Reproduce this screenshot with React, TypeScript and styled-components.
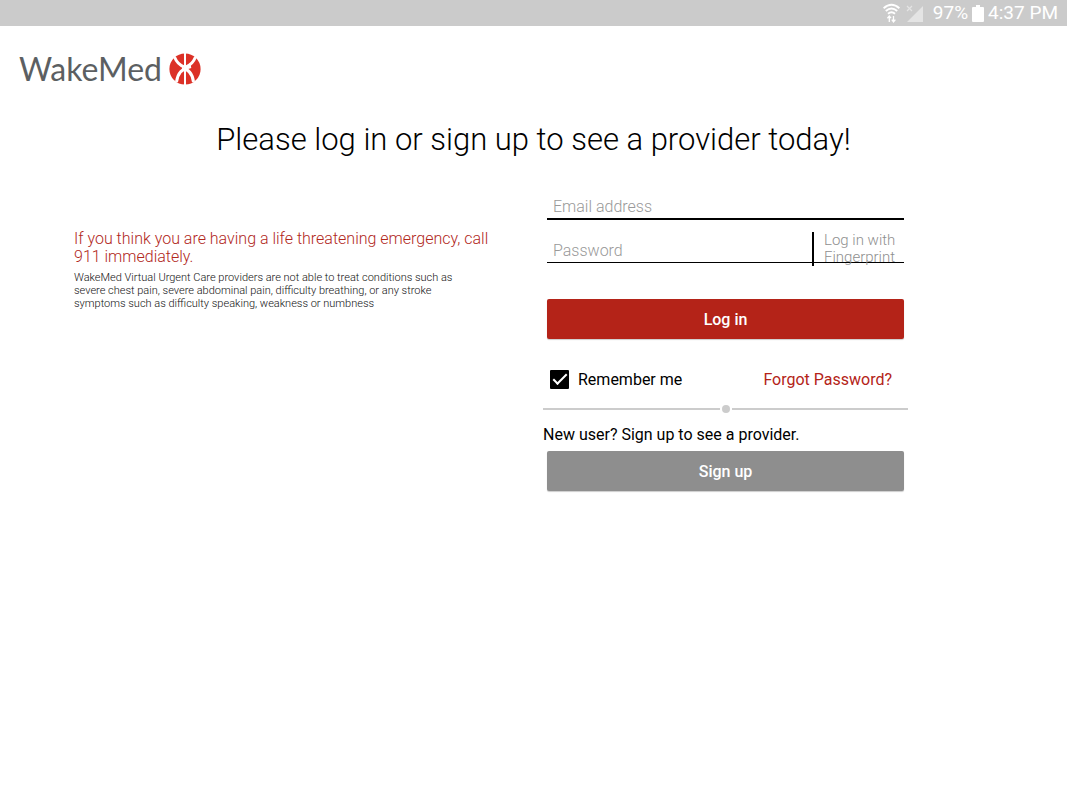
import React from "react";
import styled, { createGlobalStyle } from "styled-components";

const GlobalStyle = createGlobalStyle`
  *, *::before, *::after { box-sizing: border-box; }
  body {
    margin: 0;
    background: #fff;
    color: #000;
    font-family: Roboto, "Liberation Sans", sans-serif;
    font-size: 16px;
  }
  button, input { font: inherit; }
`;

const StatusBar = styled.div`
  display: flex;
  align-items: center;
  justify-content: flex-end;
  height: 26px;
  padding-right: 9px;
  background: #cbcbcb;
  color: #fff;
  font-size: 19px;
  line-height: 24px;
  white-space: nowrap;
`;

const StatusIcon = styled.svg<{ $gap: number }>`
  display: block;
  flex: none;
  margin-right: ${(p) => p.$gap}px;
`;

const StatusText = styled.span<{ $gap?: number }>`
  margin-right: ${(p) => p.$gap ?? 0}px;
`;

const Header = styled.header`
  display: flex;
  align-items: center;
  height: 60px;
  padding: 26px 19px 0;
`;

const Brand = styled.a`
  display: flex;
  align-items: center;
  gap: 7px;
  color: #5c5f62;
  text-decoration: none;
`;

const BrandName = styled.span`
  font-family: Lato, "Liberation Sans", sans-serif;
  font-size: 32px;
  font-weight: 400;
  line-height: 32px;
`;

const Title = styled.h1`
  margin: 34px 0 0;
  font-size: 31px;
  font-weight: 300;
  line-height: 40px;
  text-align: center;
`;

const Columns = styled.main`
  display: grid;
  grid-template-columns: 420fr 365fr;
  column-gap: 49px;
  align-items: start;
  padding: 33px 159px 40px 74px;
`;

const Notice = styled.section`
  padding-top: 37px;
`;

const Warning = styled.p`
  margin: 0;
  color: #b1271b;
  font-weight: 300;
  line-height: 18px;
`;

const Detail = styled.p`
  margin: 5px 0 0;
  padding-right: 20px;
  color: #111;
  font-size: 11px;
  font-weight: 300;
  line-height: 13px;
`;

const Form = styled.form`
  display: flex;
  flex-direction: column;
`;

const Field = styled.div<{ $line: number }>`
  display: flex;
  align-items: flex-end;
  height: ${(p) => (p.$line === 2 ? 27 : 43)}px;
  margin: 0 4px;
  border-bottom: ${(p) => p.$line}px solid #000;
`;

const Input = styled.input`
  flex: 1;
  min-width: 0;
  height: 24px;
  padding: 0 6px;
  border: 0;
  outline: 0;
  background: transparent;
  font-weight: 300;
  &::placeholder {
    color: #999;
    opacity: 1;
  }
`;

const FingerprintButton = styled.button`
  flex: none;
  width: 92px;
  height: 34px;
  margin-bottom: -4px;
  padding: 0 0 0 10px;
  border: 0;
  border-left: 2px solid #000;
  background: transparent;
  color: #8f8f8f;
  font-size: 15px;
  font-weight: 300;
  line-height: 17px;
  text-align: left;
`;

const Button = styled.button<{ $color: string }>`
  height: 40px;
  margin: 0 4px;
  border: 0;
  border-radius: 2px;
  background: ${(p) => p.$color};
  box-shadow: 0 1px 1px rgba(0, 0, 0, 0.2);
  color: #fff;
  font-weight: 500;
`;

const LoginButton = styled(Button)`
  margin-top: 36px;
`;

const Options = styled.div`
  display: flex;
  align-items: center;
  justify-content: space-between;
  height: 20px;
  margin-top: 30px;
  padding: 0 16px 0 7px;
`;

const Remember = styled.label`
  display: flex;
  align-items: center;
  gap: 9px;
`;

const Checkbox = styled.input`
  appearance: none;
  width: 19px;
  height: 19px;
  margin: 0;
  border: 2px solid #000;
  border-radius: 1px;
  display: grid;
  place-items: center;
  &:checked { background: #000; }
  &:checked::after {
    content: "";
    width: 14px;
    height: 7px;
    border: solid #fff;
    border-width: 0 0 2px 2px;
    transform: translateY(-2px) rotate(-45deg);
  }
`;

const ForgotLink = styled.a`
  color: #b42318;
  text-decoration: none;
`;

const Divider = styled.div`
  display: flex;
  align-items: center;
  gap: 2px;
  height: 8px;
  margin-top: 16px;
  &::before, &::after {
    content: "";
    flex: 1;
    height: 2px;
    background: #ccc;
  }
`;

const Dot = styled.span`
  width: 8px;
  height: 8px;
  border-radius: 50%;
  background: #ccc;
`;

const NewUser = styled.p`
  margin: 12px 0 6px;
  line-height: 20px;
`;

function WifiIcon() {
  return (
    <StatusIcon $gap={6} width="17" height="20" viewBox="0 0 17 20" fill="none" stroke="#fff" strokeWidth="1.9" aria-hidden="true">
      <path d="M0.6 5.2Q8.5 -1.8 16.4 5.2M2.8 8Q8.5 3 14.2 8M5 10.7Q8.5 7.6 12 10.7" />
      <path d="M6.3 19V13.5M4.4 15.2 6.3 13.1 8 15.2M10.5 13V18.6M8.8 16.7 10.5 18.9 12.4 16.7" strokeWidth="1.3" />
    </StatusIcon>
  );
}

function SignalIcon() {
  return (
    <StatusIcon $gap={10} width="17" height="18" viewBox="0 0 17 18" aria-hidden="true">
      <path d="M17 2V18H1Z" fill="#e4e4e4" />
      <path d="M1 2 6 7M6 2 1 7" stroke="#e4e4e4" strokeWidth="1.2" />
    </StatusIcon>
  );
}

function BatteryIcon() {
  return (
    <StatusIcon $gap={4} width="12" height="18" viewBox="0 0 12 18" aria-hidden="true">
      <path d="M4 1H8V3H11Q12 3 12 4V17Q12 18 11 18H1Q0 18 0 17V4Q0 3 1 3H4Z" fill="#fff" />
    </StatusIcon>
  );
}

function BrandMark() {
  return (
    <svg width="32" height="32" viewBox="0 0 32 32" aria-hidden="true">
      <circle cx="16" cy="16" r="15.6" fill="#dc3127" />
      <g fill="none" stroke="#fff">
        <path d="M16 0V32" strokeWidth="2" />
        <path d="M5.5 4Q8.5 11.500 15 13.800M26.500 4Q23.500 11.500 17 13.800" strokeWidth="3" />
        <path d="M22 13.500Q9 16 7.500 29M13 15.500Q23 16.500 24.500 29" strokeWidth="3" />
      </g>
    </svg>
  );
}

export default function App() {
  return (
    <>
      <GlobalStyle />
      <StatusBar>
        <WifiIcon />
        <SignalIcon />
        <StatusText $gap={4}>97%</StatusText>
        <BatteryIcon />
        <StatusText>4:37 PM</StatusText>
      </StatusBar>
      <Header>
        <Brand href="#">
          <BrandName>WakeMed</BrandName>
          <BrandMark />
        </Brand>
      </Header>
      <Title>Please log in or sign up to see a provider today!</Title>
      <Columns>
        <Notice>
          <Warning>If you think you are having a life threatening emergency, call 911 immediately.</Warning>
          <Detail>
            WakeMed Virtual Urgent Care providers are not able to treat conditions such as severe chest pain, severe
            abdominal pain, difficulty breathing, or any stroke symptoms such as difficulty speaking, weakness or numbness
          </Detail>
        </Notice>
        <Form onSubmit={(e) => e.preventDefault()}>
          <Field $line={2}>
            <Input type="email" placeholder="Email address" aria-label="Email address" />
          </Field>
          <Field $line={1}>
            <Input type="password" placeholder="Password" aria-label="Password" />
            <FingerprintButton type="button">
              Log in with
              <br />
              Fingerprint
            </FingerprintButton>
          </Field>
          <LoginButton type="submit" $color="#b42318">Log in</LoginButton>
          <Options>
            <Remember>
              <Checkbox type="checkbox" defaultChecked />
              Remember me
            </Remember>
            <ForgotLink href="#">Forgot Password?</ForgotLink>
          </Options>
          <Divider>
            <Dot />
          </Divider>
          <NewUser>New user? Sign up to see a provider.</NewUser>
          <Button type="button" $color="#8e8e8e">Sign up</Button>
        </Form>
      </Columns>
    </>
  );
}
